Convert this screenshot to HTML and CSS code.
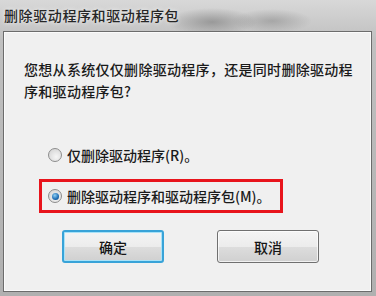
FILE: index.html
```html
<!DOCTYPE html>
<html lang="zh-CN">
<head>
    <meta charset="UTF-8">
    <title>删除驱动程序和驱动程序包</title>
    <link rel="stylesheet" href="styles.css">
</head>
<body>
<div class="window">
	<div class="titlebar">删除驱动程序和驱动程序包</div>
	<div class="panel">
		<div class="message">
			您想从系统仅仅删除驱动程序，还是同时删除驱动程<br>序和驱动程序包?
		</div>
		<div class="options">
			<div class="option">
				<span class="radio"></span>
				<span class="label">仅删除驱动程序(R)。</span>
			</div>
			<div class="option marked">
				<span class="radio checked"></span>
				<span class="label">删除驱动程序和驱动程序包(M)。</span>
			</div>
		</div>
		<div class="buttons">
			<div class="btn default">确定</div>
			<div class="btn">取消</div>
		</div>
	</div>
</div>
</body>
</html>
```

FILE: styles.css
```css
body {
	margin: 0;
	font-family: "Noto Sans CJK SC", "Liberation Sans", sans-serif;
}

.window {
	width: 376px;
	height: 296px;
	box-sizing: border-box;
	padding: 0 4px 4px 3px;
	display: flex;
	flex-direction: column;
	background:
		radial-gradient(ellipse 45px 14px at 212px 22px, rgba(120,120,120,.6), rgba(120,120,120,0)),
		radial-gradient(ellipse 40px 12px at 272px 21px, rgba(130,130,130,.5), rgba(130,130,130,0)),
		linear-gradient(#d8d8d8, #c0c0c0 40px, #b0b0b0);
}

.titlebar {
	height: 31px;
	line-height: 31px;
	padding-left: 1px;
	font-size: 14px;
	font-weight: 500;
	letter-spacing: .6px;
	color: #262626;
	text-shadow: 0 0 4px rgba(255,255,255,.9);
}

.panel {
	flex: 1;
	background: #f0f0f0;
	border: 1px solid #6c6c6c;
	box-shadow: inset 0 0 0 1px #fbfbfb;
	display: flex;
	flex-direction: column;
}

.message {
	padding: 26px 0 0 20px;
	font-size: 14px;
	font-weight: 500;
	line-height: 22px;
	letter-spacing: .3px;
	color: #1a1a1a;
}

.options {
	margin: 36px 0 0 35px;
	display: flex;
	flex-direction: column;
	gap: 7px;
}

.option {
	width: 244px;
	height: 34px;
	box-sizing: border-box;
	border: 3px solid transparent;
	padding-left: 6px;
	display: flex;
	align-items: center;
	gap: 5px;
	font-size: 14px;
	font-weight: 500;
	color: #1a1a1a;
}

.option.marked {
	border-color: #e8141c;
}

.radio {
	width: 12px;
	height: 12px;
	border-radius: 50%;
	border: 1px solid #8d8d8d;
	background: radial-gradient(circle at 60% 65%, #f6f6f6, #cfcfcf);
	display: flex;
	align-items: center;
	justify-content: center;
}

.radio.checked::after {
	content: "";
	width: 7px;
	height: 7px;
	border-radius: 50%;
	background: radial-gradient(circle at 40% 35%, #8fd0f5, #1d6cb3 60%, #0b3f74);
}

.buttons {
	margin: 17px 0 0 58px;
	display: flex;
	gap: 53px;
}

.btn {
	width: 102px;
	height: 33px;
	box-sizing: border-box;
	border: 1px solid #707070;
	border-radius: 3px;
	background: linear-gradient(#f4f4f4, #ececec 50%, #dddddd 51%, #d0d0d0);
	box-shadow: inset 0 0 0 1px rgba(255,255,255,.7);
	font-size: 14px;
	font-weight: 500;
	color: #151515;
	display: flex;
	align-items: center;
	justify-content: center;
}

.btn.default {
	border: 2px solid #38a3d8;
	box-shadow: inset 0 0 0 1px #a8e2f8;
}
```
